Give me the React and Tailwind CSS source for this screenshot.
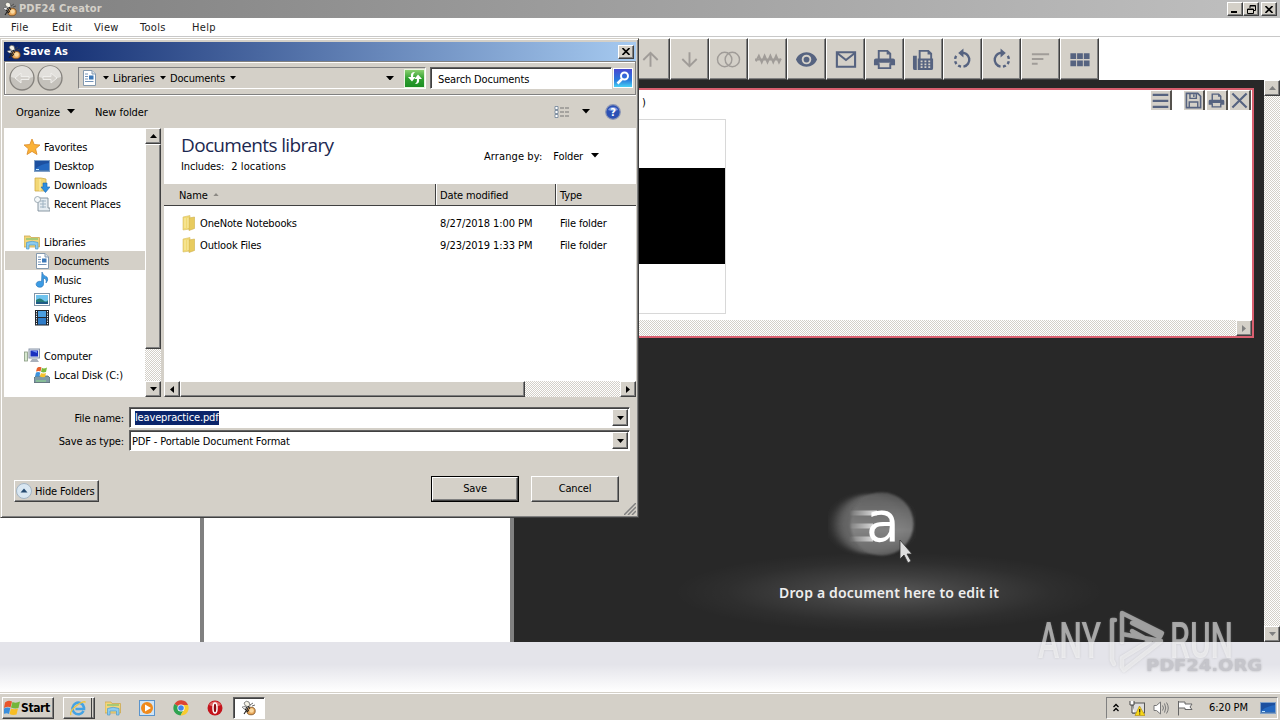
import React from 'react';

const raised = 'border border-t-white border-l-white border-r-[#404040] border-b-[#404040] shadow-[inset_-1px_-1px_0_#808080] bg-[#d4d0c8]';
const sunken = 'border border-t-[#606060] border-l-[#606060] border-r-white border-b-white shadow-[inset_1px_1px_0_#404040]';
const dither = 'bg-[conic-gradient(#fff_25%,#d4d0c8_0_50%,#fff_0_75%,#d4d0c8_0)] bg-[length:2px_2px]';

function Arrow({ dir = 'down', color = '#000', w = 7 }) {
  const paths = {
    down: 'M0 0H7L3.5 4Z',
    up: 'M0 4H7L3.5 0Z',
    left: 'M4 0V7L0 3.5Z',
    right: 'M0 0V7L4 3.5Z',
  };
  const flat = dir === 'down' || dir === 'up';
  return (
    <svg viewBox={flat ? '0 0 7 4' : '0 0 4 7'} width={flat ? w : 4} height={flat ? (w * 4) / 7 : 7} className="shrink-0">
      <path d={paths[dir]} fill={color} />
    </svg>
  );
}

function ScrollButton({ dir, color }) {
  return (
    <div className={`flex h-4 w-4 shrink-0 items-center justify-center ${raised}`}>
      <Arrow dir={dir} color={color} />
    </div>
  );
}

function Bee({ size = 16 }) {
  return (
    <svg viewBox="0 0 16 16" width={size} height={size} className="shrink-0">
      <path d="M3 3Q5 0 8 2L9 6L5 7Z" fill="#f7f4e8" stroke="#555" strokeWidth=".7" />
      <path d="M1 7L6 6L7 9L3 9Z" fill="#eee" stroke="#555" strokeWidth=".6" />
      <ellipse cx="10" cy="11" rx="4.2" ry="3.8" fill="#e8a75a" stroke="#7a4a18" strokeWidth=".8" />
      <path d="M5 7L8 11M7 6L9 9M4 9L7 12M5 11L3 14" stroke="#222" strokeWidth="1.1" />
      <circle cx="10.5" cy="10.500" r="2.200" fill="#fbd9a0" />
      <path d="M9 5L12 3M11 6L14 5" stroke="#444" strokeWidth=".8" />
    </svg>
  );
}

function CloseGlyph() {
  return (
    <svg viewBox="0 0 8 7" width="8" height="7">
      <path d="M.5 0L7.5 7M7.5 0L.5 7" stroke="#000" strokeWidth="1.6" />
    </svg>
  );
}

const toolIcons = {
  up: <path d="M12 19.500V6M4.500 12.500L12 5L19.500 12.500" />,
  down: <path d="M12 4.500V18M4.500 11.500L12 19L19.500 11.500" />,
  join: <g strokeWidth="1.5"><circle cx="8" cy="12" r="7.5" /><circle cx="16" cy="12" r="7.5" /></g>,
  zigzag: <path d="M-1 12H26M0 14L3 8L6 15L9 8L12 15L15 8L18 15L21 8L24 15L26 11" strokeWidth="2" />,
  eye: (
    <g stroke="none" fill="currentColor">
      <path fillRule="evenodd" d="M12 4.5C7 4.5 2.7 7.6 1 12c1.7 4.4 6 7.5 11 7.5s9.300-3.100 11-7.500c-1.700-4.400-6-7.500-11-7.500zM12 17a5 5 0 110-10 5 5 0 010 10z" />
      <circle cx="12" cy="12" r="3" />
    </g>
  ),
  mail: <path d="M3 4.500H22V19.500H3ZM3.500 5.500L12.500 12.500L21.500 5.500" strokeWidth="2.200" />,
  print: (
    <g>
      <path d="M6 12V3H15L18 6V12M6 16V21H18V16" />
      <path d="M15 3V6H18" strokeWidth="1.500" />
      <path fill="currentColor" stroke="none" d="M3 11H21Q23 11 23 13V18H18V15.500H6V18H1V13Q1 11 3 11Z" />
    </g>
  ),
  fax: (
    <g>
      <path fill="currentColor" stroke="none" d="M1 8H5V23H3Q1 23 1 21ZM6 11H22V21Q22 23 20 23H6Z" />
      <path d="M8 12V3H17L20 6V12" />
      <path d="M17 3V6H20" strokeWidth="1.500" />
      <path d="M9 14H19M9 17H19M9 20H19" stroke="#d4d0c8" strokeWidth="1.800" strokeDasharray="2 2" />
    </g>
  ),
  rotateLeft: (
    <g>
      <path d="M10.500 5A7.300 7.300 0 0 1 13 19.500" strokeWidth="2.500" />
      <path d="M10.500 19.500A7.300 7.300 0 0 1 6.500 7" strokeDasharray="3.200 2.400" strokeWidth="2.500" />
      <path d="M13 .5V10L7.500 5.300Z" fill="currentColor" stroke="none" />
    </g>
  ),
  rotateRight: (
    <g>
      <path d="M13.500 5A7.300 7.300 0 0 0 11 19.500" strokeWidth="2.500" />
      <path d="M13.500 19.500A7.300 7.300 0 0 0 17.500 7" strokeDasharray="3.200 2.400" strokeWidth="2.500" />
      <path d="M11 .5V10L16.500 5.300Z" fill="currentColor" stroke="none" />
    </g>
  ),
  sort: <path d="M3 6.500H21M3 11.500H15M3 16.500H9" />,
  grid: (
    <path fill="currentColor" stroke="none" d="M2.500 5.500H8.500V11.500H2.500ZM9.500 5.500H15.500V11.500H9.500ZM16.500 5.500H22.500V11.500H16.500ZM2.500 13H8.500V19H2.500ZM9.500 13H15.500V19H9.500ZM16.500 13H22.500V19H16.500Z" />
  ),
  list: <path d="M1 4H23M1 12.500H23M1 21H23" strokeWidth="3" />,
  save: (
    <g>
      <path d="M2 2H18L22 6V22H2Z" strokeWidth="2.300" />
      <path d="M7 2V9H16V2M6 22V14H18V22M12.500 3V7" />
    </g>
  ),
  close: <path d="M2 2L22 22M22 2L2 22" strokeWidth="3" />,
};

function ToolIcon({ name, off, size = 23 }) {
  return (
    <svg viewBox="0 0 24 24" width={size} height={size} fill="none" stroke="currentColor" strokeWidth="2" className={off ? 'overflow-visible text-[#a09c98]' : 'text-[#566380]'}>
      {toolIcons[name]}
    </svg>
  );
}

const tools = [
  ['up', true], ['down', true], ['join', true], ['zigzag', true], ['eye'], ['mail'], ['print'],
  ['fax'], ['rotateLeft'], ['rotateRight'], ['sort', true], ['grid'],
];

const icons = {
  star: <path d="M8 0L10.200 5.500L16 6L11.600 9.800L13 15.500L8 12.400L3 15.500L4.400 9.800L0 6L5.800 5.500Z" fill="#fbb238" stroke="#d98a28" strokeWidth=".8" />,
  desktop: (
    <g>
      <rect x=".5" y="2.500" width="15" height="11" fill="#2468c0" stroke="#7fa0c8" />
      <path d="M1 3H15V5Q7 6 1 11Z" fill="#1c50a0" />
      <path d="M1 12.500H15" stroke="#4a78b0" />
      <path d="M2 11.500H5" stroke="#bfe6ff" />
    </g>
  ),
  downloads: (
    <g>
      <path d="M1 1H7L12 2V14H1Z" fill="#f3d876" stroke="#d0ab48" strokeWidth=".8" />
      <path d="M6 2V14" stroke="#fff2b0" />
      <path d="M9 6H13V10H16L11.500 15.500L7 10H9Z" fill="#2d8ee0" stroke="#1d68b0" strokeWidth=".6" />
    </g>
  ),
  recent: (
    <g>
      <path d="M4 2H14V12H16V15H4Z" fill="#e6edf2" stroke="#7d8c98" strokeWidth=".9" />
      <path d="M6 5H12M6 8H12M6 11H12M9 4V12" stroke="#9fb3c2" />
      <circle cx="3.500" cy="3.500" r="3" fill="#f4f8fa" stroke="#8b9aa5" strokeWidth=".8" />
    </g>
  ),
  libraries: (
    <g>
      <path d="M0 2H6L7 3.500H15.500V13H0Z" fill="#f2d57a" stroke="#cda850" strokeWidth=".8" />
      <path d="M2 5H14" stroke="#5fbf73" />
      <path d="M2.500 15V8.500Q8 6 14 8.500V15H11.500V11H5V15Z" fill="#8ccbf0" stroke="#4f9bc8" strokeWidth=".7" />
    </g>
  ),
  document: (
    <g>
      <path d="M2.500 .5H11L14.500 4V15.500H2.500Z" fill="#fff" stroke="#8499ad" />
      <path d="M4 4H7M4 6.500H7M4 9H7M4 11.500H12.500" stroke="#7494b8" />
      <rect x="8" y="5.500" width="4.500" height="4" fill="#3b78b8" />
      <path d="M11 .5V4H14.500" fill="#dae4ec" stroke="#8499ad" />
    </g>
  ),
  music: <path d="M8 0Q9 4 13 5Q15 8 12 11Q13 7 9.500 6V12A3.700 3 0 1 1 7.500 9.600Z" fill="#3b9be4" stroke="#236fb4" strokeWidth=".6" />,
  pictures: (
    <g>
      <rect x=".5" y="2.500" width="15" height="12" fill="#fff" stroke="#8195a8" />
      <rect x="2" y="4" width="12" height="9" fill="#6fc3ee" />
      <path d="M2 9Q6 6 9 9T14 9V13H2Z" fill="#257b75" />
      <path d="M2 12H14" stroke="#1c4f8c" strokeWidth="1.500" />
    </g>
  ),
  videos: (
    <g>
      <rect x="1" y="0" width="14" height="15.500" fill="#20262e" />
      <rect x="4" y="1" width="8" height="6" fill="#4a9ee0" />
      <rect x="4" y="8" width="8" height="6.500" fill="#2f7cc8" />
      <path d="M2.500 1V15M13.500 1V15" stroke="#fff" strokeDasharray="1.200 1.200" />
    </g>
  ),
  computer: (
    <g>
      <rect x="5" y="1" width="10.500" height="9" fill="#dfe5ee" stroke="#8a96a8" />
      <rect x="6.500" y="2.500" width="7.500" height="6" fill="#1a2fbe" />
      <path d="M8 3H13V5Z" fill="#6c8cf0" />
      <path d="M8 11H13L15 14H6Z" fill="#a8b0bc" />
      <rect x=".5" y="4" width="3" height="9" fill="#d8e8d0" stroke="#879a80" strokeWidth=".8" />
    </g>
  ),
  disk: (
    <g>
      <path d="M0 11L2 9H14L16 11V15.500H0Z" fill="#7f9aa5" stroke="#50656e" strokeWidth=".8" />
      <path d="M2 14H12" stroke="#8fe08a" />
      <path d="M3 1Q5 -1 7.500 .5L6.500 4.500Q5 3.500 2 4.500Z" fill="#e8602c" />
      <path d="M8 1Q10 2 13 .5L12 5Q9 6 7 4.800Z" fill="#7ab83a" />
      <path d="M2 5.500Q4 4.500 6.300 5.500L5.300 9.500H1Z" fill="#3c92dc" />
      <path d="M7 6Q9 7 12 6L11 10Q8 10.500 5.800 9.500Z" fill="#f6c22c" />
    </g>
  ),
  folder: (
    <g>
      <path d="M2 2L9 .5V14L2 15Z" fill="#f0d873" stroke="#d9bf66" strokeWidth=".6" />
      <path d="M8 3L13.500 2V13.500L8 15.500Z" fill="#e8cb5e" stroke="#cfb04c" strokeWidth=".6" />
      <path d="M4 3V13M7 3V13" stroke="#fbefac" />
    </g>
  ),
  flag: (
    <g>
      <path d="M1 2.500Q4 -.5 8 1.500L6.500 7.500Q4 6 0 8Z" fill="#e8552b" />
      <path d="M8.500 2Q12 3.500 16 1.500L14.500 8Q11 9 7 7.500Z" fill="#73b63a" />
      <path d="M0 8.500Q3 7 6.300 8L5 14Q3 12.500 -1 14Z" fill="#3a8edc" />
      <path d="M7 8.500Q10 10 14 8.500L12.500 14.500Q9 15.500 5.500 14Z" fill="#f8bd25" />
    </g>
  ),
  ie: (
    <g>
      <path d="M13.500 11A5.800 5.800 0 1 1 14 7.500V9H5.500" fill="none" stroke="#44a3e4" strokeWidth="2.600" />
      <path d="M1 15Q-1 12 6 6Q14 0 15.500 2.500" fill="none" stroke="#f0c53c" strokeWidth="1.300" />
    </g>
  ),
  player: (
    <g>
      <rect x=".5" y=".5" width="15" height="15" fill="#cfe4f6" stroke="#5a94cc" />
      <circle cx="8" cy="8" r="6" fill="#f08a1c" />
      <path d="M6 4.500V11.500L12 8Z" fill="#fff" />
    </g>
  ),
  chrome: (
    <g>
      <path d="M8 8L1.500 4A7.500 7.500 0 0 1 15 5H8Z" fill="#dd4535" />
      <path d="M8 8L1.500 4A7.500 7.500 0 0 0 7.500 15.500L11 9.500Z" fill="#2fa350" />
      <path d="M8 5H15A7.500 7.500 0 0 1 7.500 15.500L11 9.500Z" fill="#f8cb30" />
      <circle cx="8" cy="8" r="3.600" fill="#fff" />
      <circle cx="8" cy="8" r="2.800" fill="#4285ec" />
    </g>
  ),
  opera: (
    <g>
      <circle cx="8" cy="8" r="7.500" fill="#c4141c" />
      <path d="M2 5A7 7 0 0 1 14 5Q8 8 2 5Z" fill="#e26a68" />
      <ellipse cx="8" cy="8" rx="2" ry="5" fill="#8c0a10" stroke="#fff" strokeWidth="1.500" />
    </g>
  ),
};

function Icon({ name, size = 16 }) {
  return <svg viewBox="0 0 16 16" width={size} height={size} className="shrink-0">{icons[name]}</svg>;
}

const tree = [
  ['Favorites', 'star', 0],
  ['Desktop', 'desktop', 1],
  ['Downloads', 'downloads', 1],
  ['Recent Places', 'recent', 1],
  null,
  ['Libraries', 'libraries', 0],
  ['Documents', 'document', 1],
  ['Music', 'music', 1],
  ['Pictures', 'pictures', 1],
  ['Videos', 'videos', 1],
  null,
  ['Computer', 'computer', 0],
  ['Local Disk (C:)', 'disk', 1],
];

const files = [
  ['OneNote Notebooks', '8/27/2018 1:00 PM'],
  ['Outlook Files', '9/23/2019 1:33 PM'],
];

function NavButton({ flip }) {
  return (
    <svg viewBox="0 0 26 26" width="26" height="26" className={flip ? '-scale-x-100' : ''}>
      <circle cx="13" cy="13" r="12" fill="#c4c1bb" stroke="#85827d" strokeWidth="1.300" />
      <path d="M2 12A11 11 0 0 1 24 12Q13 16 2 12Z" fill="#e2e0dc" />
      <path d="M20 11.500H12V8L6 13L12 18V14.500H20Z" fill="#d4d1cc" stroke="#efeeeb" />
    </svg>
  );
}

function DialogNav() {
  return (
    <div className="flex h-[34px] shrink-0 items-center border border-[#808080] pl-1 shadow-[inset_1px_1px_0_#fff,0_1px_0_#fff]">
      <div className="flex gap-[2px]">
        <NavButton />
        <NavButton flip />
      </div>
      <div className="ml-[15px] flex h-[22px] w-[348px] items-center border border-t-[#808080] border-l-[#808080] border-r-white border-b-white pl-[2px]">
        <Icon name="document" />
        <span className="ml-[6px] flex w-[9px]"><Arrow w={6} /></span>
        <span className="ml-[1px] w-[47px] pt-[2px]">Libraries</span>
        <Arrow w={6} />
        <span className="ml-[4px] w-[60px] pt-[2px]">Documents</span>
        <Arrow w={6} />
        <span className="mr-[10px] ml-auto flex"><Arrow w={8} /></span>
        <div className="flex h-[19px] w-[21px] items-center justify-center border border-[#e8f6e0] bg-[linear-gradient(#8ad070,#30a030_50%,#1c8f24)]">
          <svg viewBox="0 0 16 12" width="16" height="12" fill="#fff">
            <path d="M8 0Q3 0 4 5H1L5 9.500L8.500 5H6Q5.500 2 8 0Z" />
            <path d="M8 12Q13 12 12 7H15L11 2.500L7.500 7H10Q10.500 10 8 12Z" />
          </svg>
        </div>
      </div>
      <div className={`ml-[4px] flex h-[22px] w-[182px] items-center bg-white pl-[7px] ${sunken}`}>
        <span className="pt-[3px]">Search Documents</span>
      </div>
      <div className="ml-px flex h-5 w-5 items-center justify-center border border-white bg-[linear-gradient(#4848d0,#2878dc_60%,#48d0f4)]">
        <svg viewBox="0 0 14 14" width="14" height="14" fill="none" stroke="#fff" strokeWidth="2">
          <circle cx="8.500" cy="5" r="3.500" />
          <path d="M6 8L1.500 12.500" strokeWidth="2.500" />
        </svg>
      </div>
    </div>
  );
}

function FolderTree() {
  return (
    <div className="flex w-[157px] bg-white">
      <div className="w-[141px] pt-[9px]">
        {tree.map((row, i) =>
          row ? (
            <div
              key={row[0]}
              className={`ml-px flex h-[19px] items-center gap-[4px] ${row[2] ? 'pl-[29px]' : 'pl-[19px]'} ${row[0] === 'Documents' ? 'bg-[#d4d0c8]' : ''}`}
            >
              <Icon name={row[1]} />
              <span className="pt-[2px] whitespace-nowrap">{row[0]}</span>
            </div>
          ) : (
            <div key={i} className="h-[19px]" />
          )
        )}
      </div>
      <div className={`flex w-4 flex-col ${dither}`}>
        <ScrollButton dir="up" />
        <div className={`h-[205px] ${raised}`} />
        <div className="grow" />
        <ScrollButton dir="down" />
      </div>
    </div>
  );
}

function FileList() {
  return (
    <div className="ml-[3px] flex w-[472px] flex-col bg-white">
      <div className="flex h-[55px] justify-between pl-[17px]">
        <div>
          <div className="mt-[5px] font-['Open_Sans'] text-[19px] leading-6 tracking-[-0.65px] text-[#1c2850]">Documents library</div>
          <div className="mt-[3px] flex gap-[7px] leading-[14px]"><span>Includes:</span><span className="tracking-[0.1px]">2 locations</span></div>
        </div>
        <div className="mr-[37px] flex items-center">
          <span className="pt-[2px] tracking-[0.1px]">Arrange by:</span>
          <span className="mr-[8px] ml-[11px] pt-[2px]">Folder</span>
          <Arrow w={8} />
        </div>
      </div>
      <div className="flex h-[23px] items-stretch border-b border-b-[#404040] bg-[#d4d0c8] pt-px shadow-[inset_0_1px_0_#fff]">
        <div className="flex w-[272px] items-center gap-[5px] border-r border-[#404040] pl-[15px]">
          <span className="pt-[2px]">Name</span>
          <Arrow dir="up" w={6} color="#8c8984" />
        </div>
        <div className="flex w-[120px] items-center border-r border-l border-l-white border-r-[#404040] pt-[2px] pl-[3px]">Date modified</div>
        <div className="flex items-center border-l border-white pt-[2px] pl-[3px]">Type</div>
      </div>
      <div className="grow pt-[6px]">
        {files.map(([name, date]) => (
          <div key={name} className="flex h-[22px] items-center pl-[17px]">
            <Icon name="folder" />
            <span className="ml-[3px] w-[240px] pt-[2px]">{name}</span>
            <span className="w-[120px] pt-[2px] tracking-[-0.08px]">{date}</span>
            <span className="pt-[2px]">File folder</span>
          </div>
        ))}
      </div>
      <div className={`flex h-4 ${dither}`}>
        <ScrollButton dir="left" />
        <div className={`w-[345px] ${raised}`} />
        <div className="grow" />
        <ScrollButton dir="right" />
      </div>
    </div>
  );
}

function Combo({ label, children }) {
  return (
    <div className="flex h-[23px] items-center">
      <span className="w-[120px] pt-[2px] text-right">{label}</span>
      <div className={`ml-[5px] flex h-[21px] w-[501px] items-center justify-between bg-white pr-[1px] pl-[2px] ${sunken}`}>
        {children}
        <div className={`flex h-[17px] w-4 items-center justify-center ${raised}`}><Arrow /></div>
      </div>
    </div>
  );
}

function SaveDialog() {
  return (
    <div className="absolute top-[38px] left-0 flex h-[480px] w-[639px] flex-col border border-t-[#d4d0c8] border-l-[#d4d0c8] border-r-[#404040] border-b-[#404040] bg-[#d4d0c8] pt-[3px] pr-[2px] pl-[3px] shadow-[inset_1px_1px_0_#fff,inset_-1px_-1px_0_#808080]">
      <div className="flex h-[19px] shrink-0 items-center bg-[linear-gradient(90deg,#0a246a,#a6caf0)] pr-[2px] pl-[2px] text-white">
        <Bee />
        <span className="ml-[1px] grow font-bold tracking-[0.15px]">Save As</span>
        <div className={`flex h-[14px] w-4 items-center justify-center ${raised}`}><CloseGlyph /></div>
      </div>
      <DialogNav />
      <div className="flex h-[33px] shrink-0 items-center pl-[12px]">
        <span className="mr-[7px] pt-[2px] tracking-[-0.05px]">Organize</span>
        <Arrow w={8} />
        <span className="ml-[20px] pt-[2px] tracking-[-0.05px]">New folder</span>
        <svg viewBox="0 0 16 12" width="16" height="12" className="mr-[12px] ml-auto" fill="none">
          <path d="M1 .5H4V3.500H1ZM1 4.500H4V7.500H1ZM1 8.500H4V11.500H1Z" fill="#fff" stroke="#6b7f96" strokeWidth=".8" />
          <path d="M6 2H15M6 6H15M6 10H15" stroke="#777" strokeDasharray="4 1" />
        </svg>
        <Arrow w={8} />
        <svg viewBox="0 0 16 16" width="16" height="16" className="mr-[15px] ml-[15px]">
          <circle cx="8" cy="8" r="7.300" fill="#2c50b4" stroke="#8c96b4" strokeWidth="1.200" />
          <path d="M3 6A5.500 5 0 0 1 13 6Q8 8 3 6Z" fill="#7b9ae0" />
          <text x="8" y="12" textAnchor="middle" fontSize="11" fontWeight="bold" fill="#fff">?</text>
        </svg>
      </div>
      <div className="flex h-[269px] shrink-0">
        <FolderTree />
        <FileList />
      </div>
      <div className="pt-[9px]">
        <Combo label="File name:"><span className="ml-[3px] bg-[#0a246a] text-white">leavepractice.pdf</span></Combo>
        <Combo label="Save as type:"><span className="pt-[2px]">PDF - Portable Document Format</span></Combo>
      </div>
      <div className="mt-[24px] flex items-start">
        <div className={`mt-[4px] ml-[10px] flex h-[22px] w-[85px] items-center gap-[3px] pl-[1px] ${raised}`}>
          <svg viewBox="0 0 16 16" width="16" height="16" className="shrink-0">
            <circle cx="8" cy="8" r="7.500" fill="#d9e7f2" stroke="#a3b4c4" />
            <path d="M4.500 9.500L8 5.500L11.500 9.500Z" fill="#254a70" />
          </svg>
          <span className="pt-[2px] whitespace-nowrap">Hide Folders</span>
        </div>
        <div className="ml-[332px] h-[26px] w-[88px] border border-black">
          <div className={`flex h-full items-center justify-center ${raised}`}>Save</div>
        </div>
        <div className={`ml-[12px] flex h-[26px] w-[88px] items-center justify-center ${raised}`}>Cancel</div>
      </div>
      <svg viewBox="0 0 12 12" width="12" height="12" className="absolute right-[2px] bottom-[2px]">
        <path d="M0 12L12 0M4 12L12 4M8 12L12 8" stroke="#808080" strokeWidth="1.500" />
      </svg>
    </div>
  );
}

function MiniButton({ name, gap }) {
  return (
    <div className={`flex h-5 w-[22px] items-center justify-center border-t border-l border-r-2 border-t-white border-l-white border-r-[#55524e] bg-[#d4d0c8] ${gap ? 'mr-[11px]' : 'mr-px'}`}>
      <ToolIcon name={name} size={17} />
    </div>
  );
}

function DocumentPanel() {
  return (
    <div className="ml-[10px] flex h-[250px] w-[730px] flex-col border-2 border-[#da6070] bg-white">
      <div className="flex h-[29px] items-start">
        <span className="ml-[116px] w-[509px] pt-[6px]">)</span>
        <MiniButton name="list" gap />
        <MiniButton name="save" />
        <MiniButton name="print" />
        <MiniButton name="close" />
      </div>
      <div className="ml-[40px] h-[195px] w-[160px] border border-[#d8d8d8] pt-[48px]">
        <div className="h-24 bg-black" />
      </div>
      <div className={`mt-auto flex h-4 justify-end ${dither}`}>
        <ScrollButton dir="right" color="#808080" />
      </div>
    </div>
  );
}

function DropArea() {
  return (
    <div className="mt-[146px] flex flex-col items-center">
      <svg viewBox="0 0 440 150" width="440" height="150">
        <defs>
          <radialGradient id="floor">
            <stop offset="0" stopColor="#fff" stopOpacity=".22" />
            <stop offset=".4" stopColor="#fff" stopOpacity=".11" />
            <stop offset=".75" stopColor="#fff" stopOpacity=".03" />
            <stop offset="1" stopColor="#fff" stopOpacity="0" />
          </radialGradient>
          <linearGradient id="trail" gradientUnits="userSpaceOnUse" x1="180" x2="208" y1="0" y2="0">
            <stop offset="0" stopColor="#fff" stopOpacity="0" />
            <stop offset="1" stopColor="#fff" stopOpacity=".8" />
          </linearGradient>
          <linearGradient id="ball" x1="0" y1="0" x2="0" y2="1">
            <stop offset="0" stopColor="#5c5c5c" />
            <stop offset=".6" stopColor="#888" />
            <stop offset="1" stopColor="#666" />
          </linearGradient>
          <filter id="soft"><feGaussianBlur stdDeviation="6 1.5" /></filter>
          <filter id="edge"><feGaussianBlur stdDeviation="1.2" /></filter>
        </defs>
        <ellipse cx="220" cy="108" rx="215" ry="40" fill="url(#floor)" />
        <ellipse cx="203" cy="40" rx="36" ry="30" fill="#666" filter="url(#soft)" />
        <circle cx="213" cy="40" r="31.500" fill="url(#ball)" opacity=".85" filter="url(#edge)" />
        <path d="M180 29H208M180 42H204M180 55H204" stroke="url(#trail)" strokeWidth="5" />
        <text x="197" y="57" fontFamily="DejaVu Sans" fontSize="55" fill="#fff" letterSpacing="0">a</text>
        <path d="M231 56V75L235 71L239 79L242 77L238 70H243Z" fill="#ddd" stroke="#333" strokeWidth=".8" />
      </svg>
      <div className="-mt-[51px] font-['Noto_Sans'] text-[14px] leading-5 font-semibold tracking-[0.17px] whitespace-nowrap text-[#eee]">Drop a document here to edit it</div>
    </div>
  );
}

function Watermark() {
  return (
    <svg viewBox="0 0 232 80" width="232" height="80" className="absolute top-[606px] left-[1034px] overflow-visible drop-shadow-[0_0_1px_#8888]">
      <text x="112" y="65" fontFamily="DejaVu Sans" fontWeight="bold" fontSize="16" fill="#c5c5cb" textLength="116" lengthAdjust="spacingAndGlyphs">PDF24.ORG</text>
      <g fill="#fff" fillOpacity=".55" fontFamily="Roboto" fontSize="50" fontWeight="500">
        <text x="4" y="52" textLength="63" lengthAdjust="spacingAndGlyphs">ANY</text>
        <text x="136" y="52" textLength="63" lengthAdjust="spacingAndGlyphs">RUN</text>
      </g>
      <path
        d="M88 36V7L128 27L126 31L98 17M81 14L78 14V54L80 58M88 28L127 35L90 64L88 61V52L116 35L98 25"
        fill="none"
        stroke="#fff"
        strokeOpacity=".5"
        strokeWidth="4.500"
        strokeLinecap="round"
        strokeLinejoin="round"
      />
    </svg>
  );
}

function TitleButton({ children }) {
  return <div className={`flex h-[14px] w-4 items-center justify-center ${raised}`}>{children}</div>;
}

function Taskbar() {
  return (
    <div className="flex h-7 shrink-0 items-center border-t border-[#d4d0c8] bg-[#d4d0c8] pt-[2px] pr-[2px] pl-[2px] shadow-[inset_0_1px_0_#fff]">
      <div className={`flex h-[22px] w-[52px] items-center gap-[1px] pl-[1px] text-[12px] font-bold tracking-[-0.4px] ${raised}`}>
        <Icon name="flag" />Start
      </div>
      <div className={`ml-[9px] flex h-[22px] w-[32px] ${raised}`}>
        <div className="flex w-[28px] items-center justify-center border-r border-[#404040]"><Icon name="ie" /></div>
      </div>
      <div className="ml-[10px] flex gap-[18px]">
        <Icon name="libraries" />
        <Icon name="player" />
        <Icon name="chrome" />
        <Icon name="opera" />
      </div>
      <div className={`ml-[10px] flex h-[22px] w-[32px] items-center justify-center bg-white ${sunken}`}><Bee /></div>
      <div className="ml-auto flex h-[22px] w-[172px] items-center border border-t-[#808080] border-l-[#808080] border-r-white border-b-white pl-[6px]">
        <svg viewBox="0 0 6 9" width="6" height="9" fill="none" stroke="#000" strokeWidth="1.300">
          <path d="M.5 4L3 1.500L5.500 4M.5 8L3 5.500L5.500 8" />
        </svg>
        <svg viewBox="0 0 16 16" width="16" height="16" className="ml-[10px]">
          <rect x="4" y="3" width="11.500" height="10" fill="#ddd" stroke="#555" />
          <path d="M1 1V5H5V1M3 5V13H6" fill="#fff" stroke="#444" />
          <path d="M10.500 6L16 15.500H6Z" fill="#f8d818" stroke="#b89410" strokeWidth=".7" />
          <path d="M10.700 9V12.500M10.700 13.500V14.500" stroke="#222" strokeWidth="1.200" />
        </svg>
        <svg viewBox="0 0 16 16" width="16" height="16" className="ml-[8px]" fill="none" stroke="#777">
          <path d="M1 5.500H3.500L7.500 2V14L3.500 10.500H1Z" fill="#fff" />
          <path d="M9.500 5.500Q11.500 8 9.500 10.500M11.500 3.500Q14 8 11.500 12.500M13.500 2.500Q17 8 13.500 13.500" />
        </svg>
        <svg viewBox="0 0 16 16" width="16" height="16" className="ml-[8px]" fill="#fff" stroke="#666">
          <path d="M1.500 1V15.500M2 2H8V4H15L13 7L15 9.500H8V8H2" />
        </svg>
        <span className="ml-[16px] w-[41px] whitespace-nowrap">6:20 PM</span>
        <span className="ml-[10px]"><Icon name="desktop" /></span>
      </div>
    </div>
  );
}

export default function App() {
  return (
    <div className="relative flex h-[720px] w-[1280px] flex-col overflow-hidden bg-white font-['DejaVu_Sans_Condensed','DejaVu_Sans',sans-serif] text-[11px] leading-[14px] tracking-[-0.15px] text-black">
      <div className="flex h-[18px] shrink-0 items-center bg-[linear-gradient(90deg,#808080,#c0c0c0)] pr-[3px] pl-[2px] text-[#d4d0c8]">
        <Bee />
        <span className="ml-[1px] grow font-bold tracking-[0.1px]">PDF24 Creator</span>
        <TitleButton><div className="mt-[6px] mr-[2px] h-[2px] w-[6px] bg-black" /></TitleButton>
        <TitleButton>
          <svg viewBox="0 0 9 9" width="9" height="9" fill="none" stroke="#000">
            <path d="M3 3V.5H8.500V5.500H6.500M3 1H8.500M.5 4H6.500V8.500H.5ZM.5 4.500H6.500" />
          </svg>
        </TitleButton>
        <div className="ml-[2px] flex"><TitleButton><CloseGlyph /></TitleButton></div>
      </div>
      <div className="flex h-[19px] shrink-0 items-center border-b border-[#c8c8c8] pt-[2px] pl-[11px] tracking-[0.3px] text-[#222]">
        <span className="w-[41px]">File</span>
        <span className="w-[42px]">Edit</span>
        <span className="w-[46px]">View</span>
        <span className="w-[52px]">Tools</span>
        <span>Help</span>
      </div>
      <div className="flex h-[43px] shrink-0 bg-white pt-px pl-[631px]">
        {tools.map(([name, off]) => (
          <div key={name} className={`flex h-[42px] w-[39px] shrink-0 items-center justify-center ${raised}`}>
            <ToolIcon name={name} off={off} />
          </div>
        ))}
      </div>
      <div className="flex h-[562px] shrink-0">
        <div className="w-[204px] border-r-4 border-[#808080]" />
        <div className="w-[310px] border-r-4 border-[#808080]" />
        <div className="w-[750px] bg-[#282828] pt-2">
          <DocumentPanel />
          <DropArea />
        </div>
        <div className={`flex w-4 flex-col justify-between ${dither}`}>
          <ScrollButton dir="up" color="#808080" />
          <ScrollButton dir="down" color="#808080" />
        </div>
      </div>
      <div className="h-[50px] shrink-0 bg-[linear-gradient(#e4e4ea_45%,#fff)]" />
      <Taskbar />
      <Watermark />
      <SaveDialog />
    </div>
  );
}
